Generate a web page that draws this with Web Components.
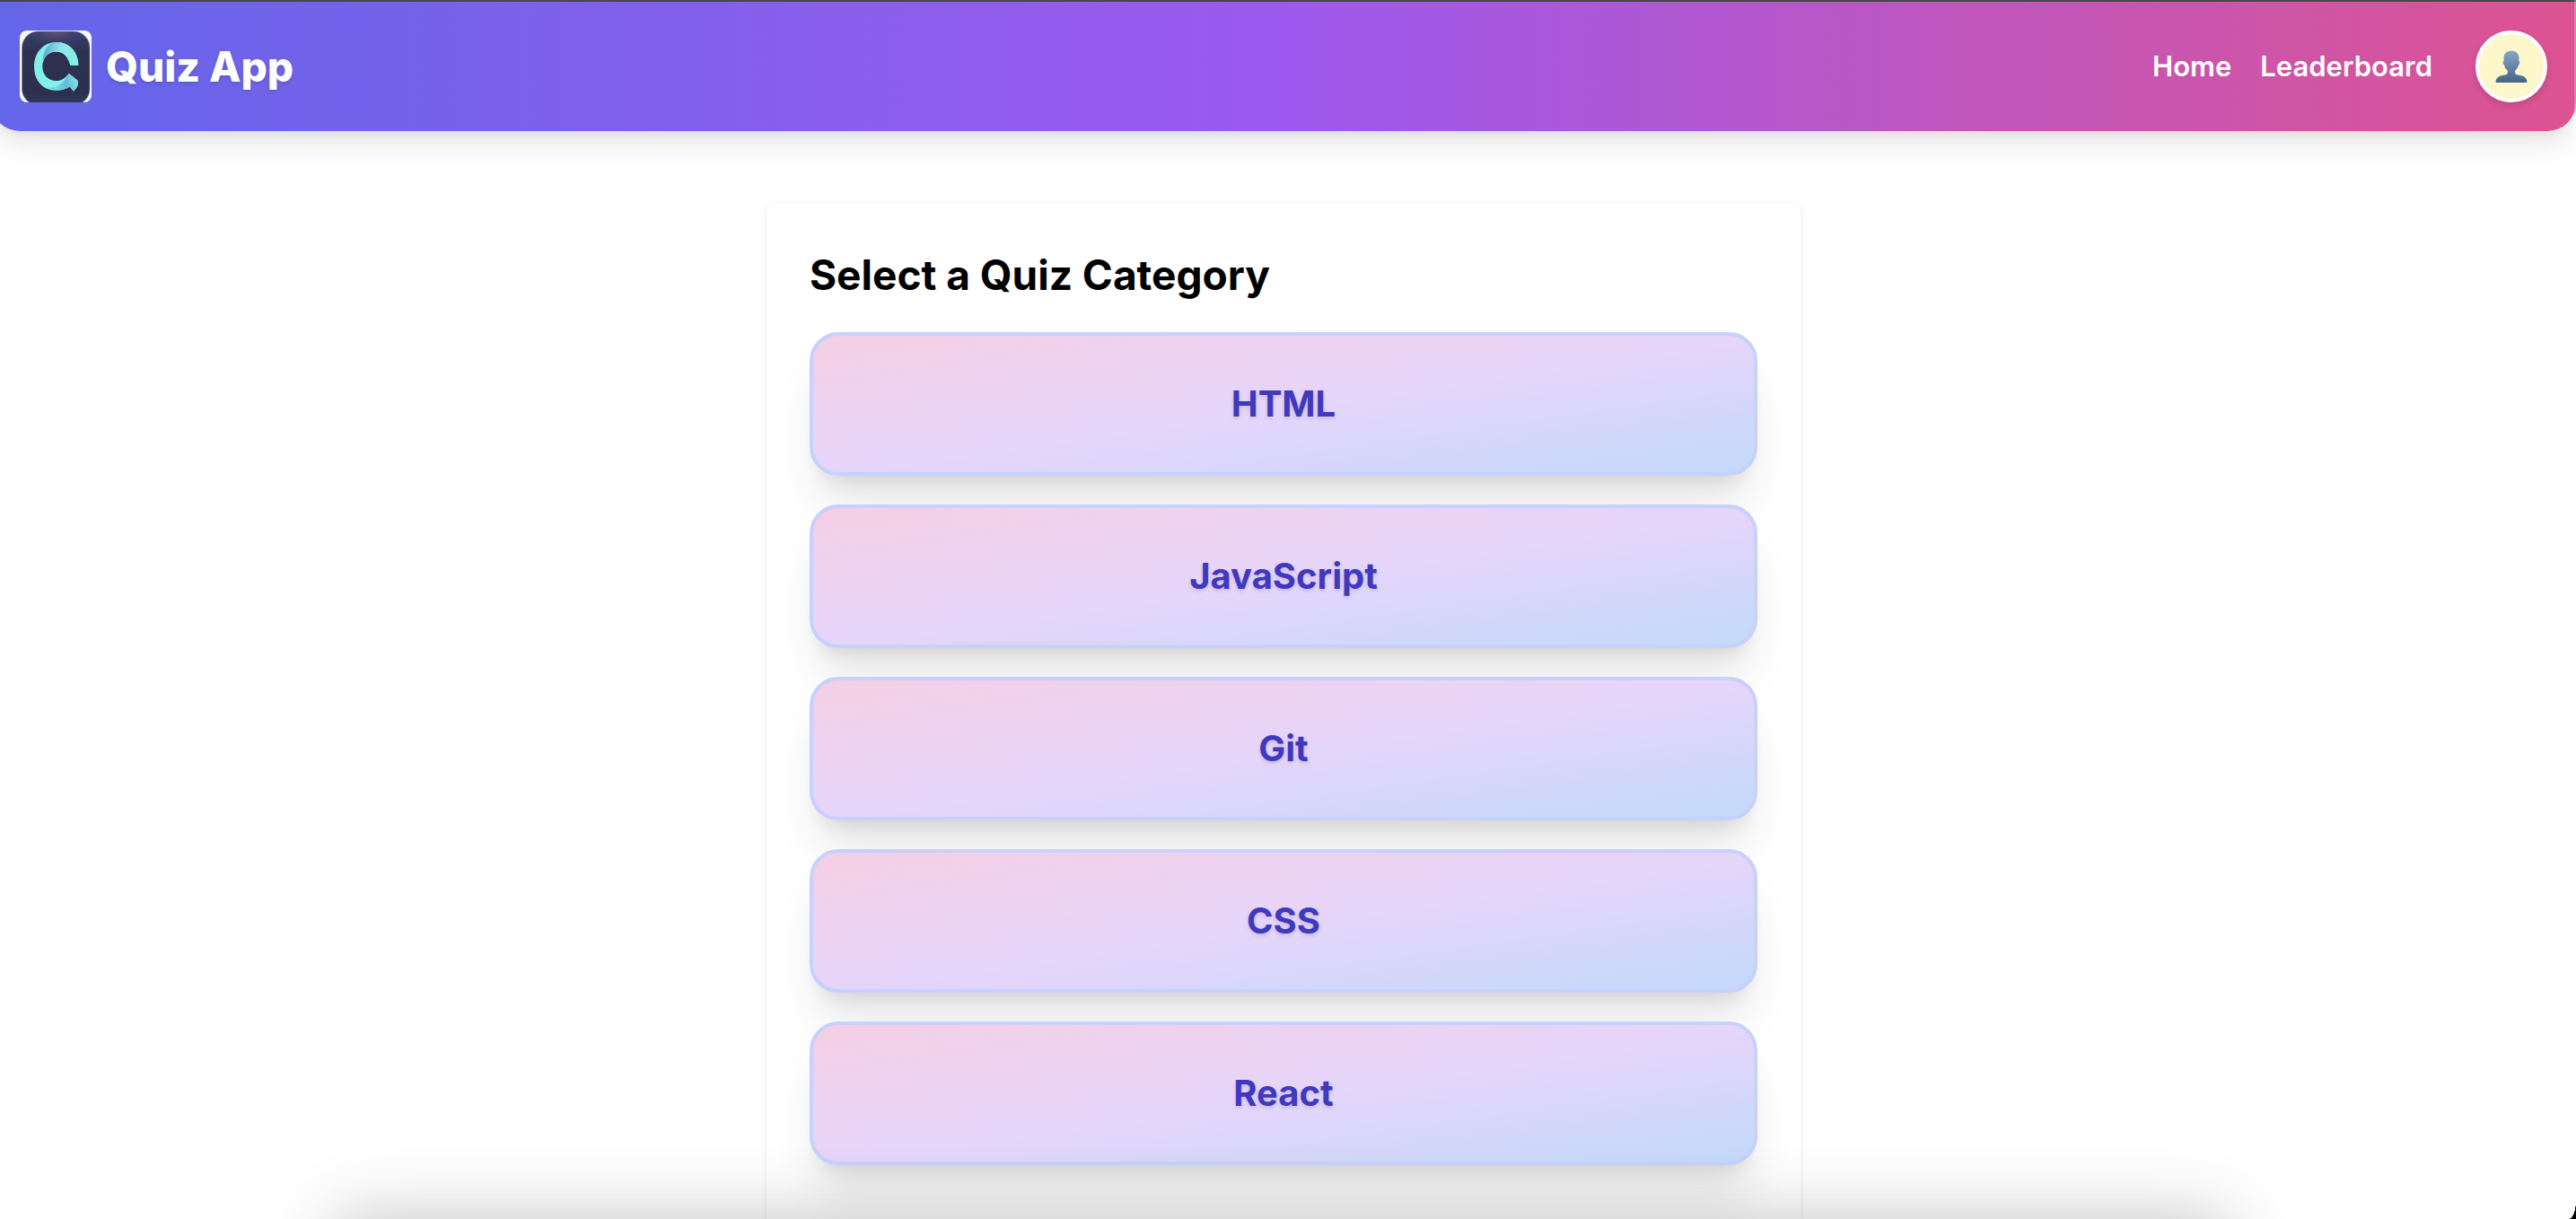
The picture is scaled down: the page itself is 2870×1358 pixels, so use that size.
<!DOCTYPE html>
<html lang="en">
<head>
<meta charset="utf-8">
<meta name="viewport" content="width=device-width, initial-scale=1">
<title>Quiz App</title>
<style>
  html { background: #fff; overflow: hidden; }
  body { margin: 0; font-family: Inter, "Liberation Sans", sans-serif; color: #000; }
</style>
</head>
<body>
<quiz-page>
  <quiz-navbar slot="header" brand="Quiz App">
    <quiz-nav-link href="#home">Home</quiz-nav-link>
    <quiz-nav-link href="#leaderboard">Leaderboard</quiz-nav-link>
    <quiz-avatar slot="account"></quiz-avatar>
  </quiz-navbar>
  <quiz-card heading="Select a Quiz Category">
    <quiz-category>HTML</quiz-category>
    <quiz-category>JavaScript</quiz-category>
    <quiz-category>Git</quiz-category>
    <quiz-category>CSS</quiz-category>
    <quiz-category>React</quiz-category>
  </quiz-card>
</quiz-page>

<script>
const define = (name, html, setup) => {
  const template = document.createElement('template');
  template.innerHTML = html;
  customElements.define(name, class extends HTMLElement {
    constructor() {
      super();
      this.attachShadow({ mode: 'open' }).append(template.content.cloneNode(true));
    }
    connectedCallback() {
      if (setup) setup(this, this.shadowRoot);
    }
  });
};

define('quiz-page', `
  <style>
    :host { display: block; height: 100vh; overflow: hidden; }
    .page { margin-left: -10px; border-top: 2px solid #484848; }
    main { display: flex; justify-content: center; padding: 80px 32px; }
    .dock-shade {
      position: fixed; top: 100vh; left: 13%; right: 13.5%; height: 200px;
      box-shadow: 0 0 80px rgba(0, 0, 0, .24); pointer-events: none;
    }
    .edge { position: fixed; top: 0; right: 0; bottom: 0; width: 2px; background: rgba(255, 255, 255, .25); }
    .corner {
      position: fixed; right: 0; bottom: 0; width: 8px; height: 20px;
      background: radial-gradient(ellipse 8px 20px at 0 0, transparent 97%, #000 100%);
    }
  </style>
  <div class="page">
    <slot name="header"></slot>
    <main><slot></slot></main>
  </div>
  <div class="dock-shade"></div>
  <div class="edge"></div>
  <div class="corner"></div>
`);

define('quiz-logo', `
  <style>
    :host { display: block; width: 80px; height: 80px; border-radius: 8px; overflow: hidden; }
    svg { display: block; width: 100%; height: 100%; }
  </style>
  <svg viewBox="0 0 80 80" aria-hidden="true">
    <defs>
      <radialGradient id="top" gradientUnits="userSpaceOnUse" cx="0" cy="0" r="1" gradientTransform="translate(40 0) scale(36 18)">
        <stop offset="0" stop-color="#6f5580"/><stop offset=".5" stop-color="#43426a"/><stop offset="1" stop-color="#38406c" stop-opacity="0"/>
      </radialGradient>
      <linearGradient id="tile" x1="0" y1="0" x2="0" y2="1">
        <stop offset="0" stop-color="#39406d"/><stop offset=".3" stop-color="#2d304f"/><stop offset=".85" stop-color="#2c304e"/><stop offset="1" stop-color="#303c5c"/>
      </linearGradient>
      <linearGradient id="arc" gradientUnits="userSpaceOnUse" x1="28" y1="24" x2="62" y2="32">
        <stop offset="0" stop-color="#5daed6"/><stop offset=".45" stop-color="#93e4e8"/><stop offset="1" stop-color="#80f0e4"/>
      </linearGradient>
      <linearGradient id="tail" gradientUnits="userSpaceOnUse" x1="42" y1="64" x2="63" y2="58">
        <stop offset="0" stop-color="#70d8e2"/><stop offset=".5" stop-color="#66b8d8"/><stop offset="1" stop-color="#7edfe4"/>
      </linearGradient>
    </defs>
    <rect width="80" height="80" fill="#f8f8fa"/>
    <rect x="2.5" y="1" width="75.5" height="82" rx="18" fill="url(#tile)" stroke="#8b8ca3" stroke-width=".6"/>
    <rect x="3" y="1.5" width="74.5" height="30" rx="17" fill="url(#top)"/>
    <path fill="#82f0e8" d="M65.3 38.7C65.3 23 55 13 41 13C26 13 16 25 16 40C16 56 26 66.7 40 66.7C46 66.7 51 65.5 55.7 62.7L60 67.7L63.5 63.5Q66 59 64.3 55.5L54.7 47.7C51 53 46 56 41 56C31 56 25.3 49 25.3 40C25.3 30 32 23.5 40.5 23.5C49 23.5 54 30 56.3 38.7Z"/>
    <path fill="url(#arc)" d="M26 36C25 26 29 17 37 13.4C52 10.5 65.3 22 65.3 38.7H56.3C54 29 49 23.5 40.5 23.5C33 23.5 27.5 28 26 36Z"/>
    <path fill="url(#tail)" d="M31 63.5C42 64.500 50 58 54.700 47.700L64.300 55.500Q66 59 63.500 63.500L60 67.700L55.700 62.700C47 67.500 38 67.500 31 63.500Z"/>
  </svg>
`);

define('quiz-navbar', `
  <style>
    :host { display: block; }
    header {
      display: flex; align-items: center; justify-content: space-between;
      padding: 32px; border-radius: 0 0 32px 32px; color: #fff;
      background: linear-gradient(to right, #6366e9, #9d59ef 50%, #dd5391);
      box-shadow: 0 20px 30px -6px rgba(0, 0, 0, .1), 0 8px 12px -8px rgba(0, 0, 0, .1);
    }
    .brand { display: flex; align-items: center; gap: 16px; color: inherit; text-decoration: none; }
    .name { font-size: 46px; line-height: 64px; font-weight: 800; text-shadow: 0 2px 4px rgba(0, 0, 0, .14); }
    nav { display: flex; align-items: center; gap: 32px; }
    .end { display: flex; align-items: center; gap: 48px; }
  </style>
  <header>
    <a class="brand" href="#home"><quiz-logo></quiz-logo><span class="name"></span></a>
    <div class="end">
      <nav><slot></slot></nav>
      <slot name="account"></slot>
    </div>
  </header>
`, (host, root) => { root.querySelector('.name').textContent = host.getAttribute('brand'); });

define('quiz-nav-link', `
  <style>
    :host { display: block; }
    a { display: block; color: #fff; text-decoration: none; font-size: 31px; line-height: 48px; font-weight: 600; }
  </style>
  <a><slot></slot></a>
`, (host, root) => { root.querySelector('a').href = host.getAttribute('href'); });

define('quiz-avatar', `
  <style>
    :host { display: block; }
    button {
      display: flex; align-items: center; justify-content: center; box-sizing: border-box;
      width: 80px; height: 80px; padding: 0; border: 4px solid #fff; border-radius: 50%;
      background: #fdf7c9; box-shadow: 0 4px 8px rgba(0, 0, 0, .12); cursor: pointer;
    }
    svg { width: 36px; height: 36px; }
  </style>
  <button type="button" aria-label="Account">
    <svg viewBox="0 0 36 36" aria-hidden="true">
      <defs><linearGradient id="bust" x1="0" y1="0" x2="0" y2="1">
        <stop offset="0" stop-color="#86a6c6"/><stop offset="1" stop-color="#48638a"/>
      </linearGradient></defs>
      <path fill="url(#bust)" d="M18 .5C23.500 .5 26.500 4 26.500 9L26.400 12C27.800 12.200 27.400 15.500 26 16.500C25.500 19 24 21 22.300 22.500C21.500 25.500 22.500 27 25 27.500C31 28 35.500 30 35.500 36H.5C.5 30 5 28 11 27.500C13.500 27 14.500 25.500 13.700 22.500C12 21 10.500 19 10 16.500C8.600 15.500 8.200 12.200 9.600 12L9.500 9C9.500 4 12.500 .5 18 .5Z"/>
    </svg>
  </button>
`);

define('quiz-card', `
  <style>
    :host { display: block; box-sizing: border-box; width: 100%; max-width: 1152px; }
    section { padding: 48px; border-radius: 8px; background: #fff; box-shadow: 0 2px 6px rgba(0, 0, 0, .1); }
    h1 { margin: 0 0 32px; font-size: 46px; line-height: 64px; font-weight: 700; }
    .list { display: flex; flex-direction: column; gap: 32px; padding-bottom: 64px; }
  </style>
  <section>
    <h1></h1>
    <div class="list"><slot></slot></div>
  </section>
`, (host, root) => { root.querySelector('h1').textContent = host.getAttribute('heading'); });

define('quiz-category', `
  <style>
    :host { display: block; }
    button {
      display: block; width: 100%; margin: 0; padding: 48px; box-sizing: border-box;
      border: 4px solid #c7d1fb; border-radius: 32px;
      background: linear-gradient(to bottom right, #f5cfe4, #e6d5fa, #c3dafb);
      box-shadow: 0 40px 50px -10px rgba(0, 0, 0, .1), 0 16px 20px -12px rgba(0, 0, 0, .1);
      font: 700 40px/56px Inter, "Liberation Sans", sans-serif; color: #4038c0;
      text-shadow: 0 2px 4px rgba(0, 0, 0, .14); cursor: pointer;
    }
  </style>
  <button type="button"><slot></slot></button>
`);
</script>
</body>
</html>
